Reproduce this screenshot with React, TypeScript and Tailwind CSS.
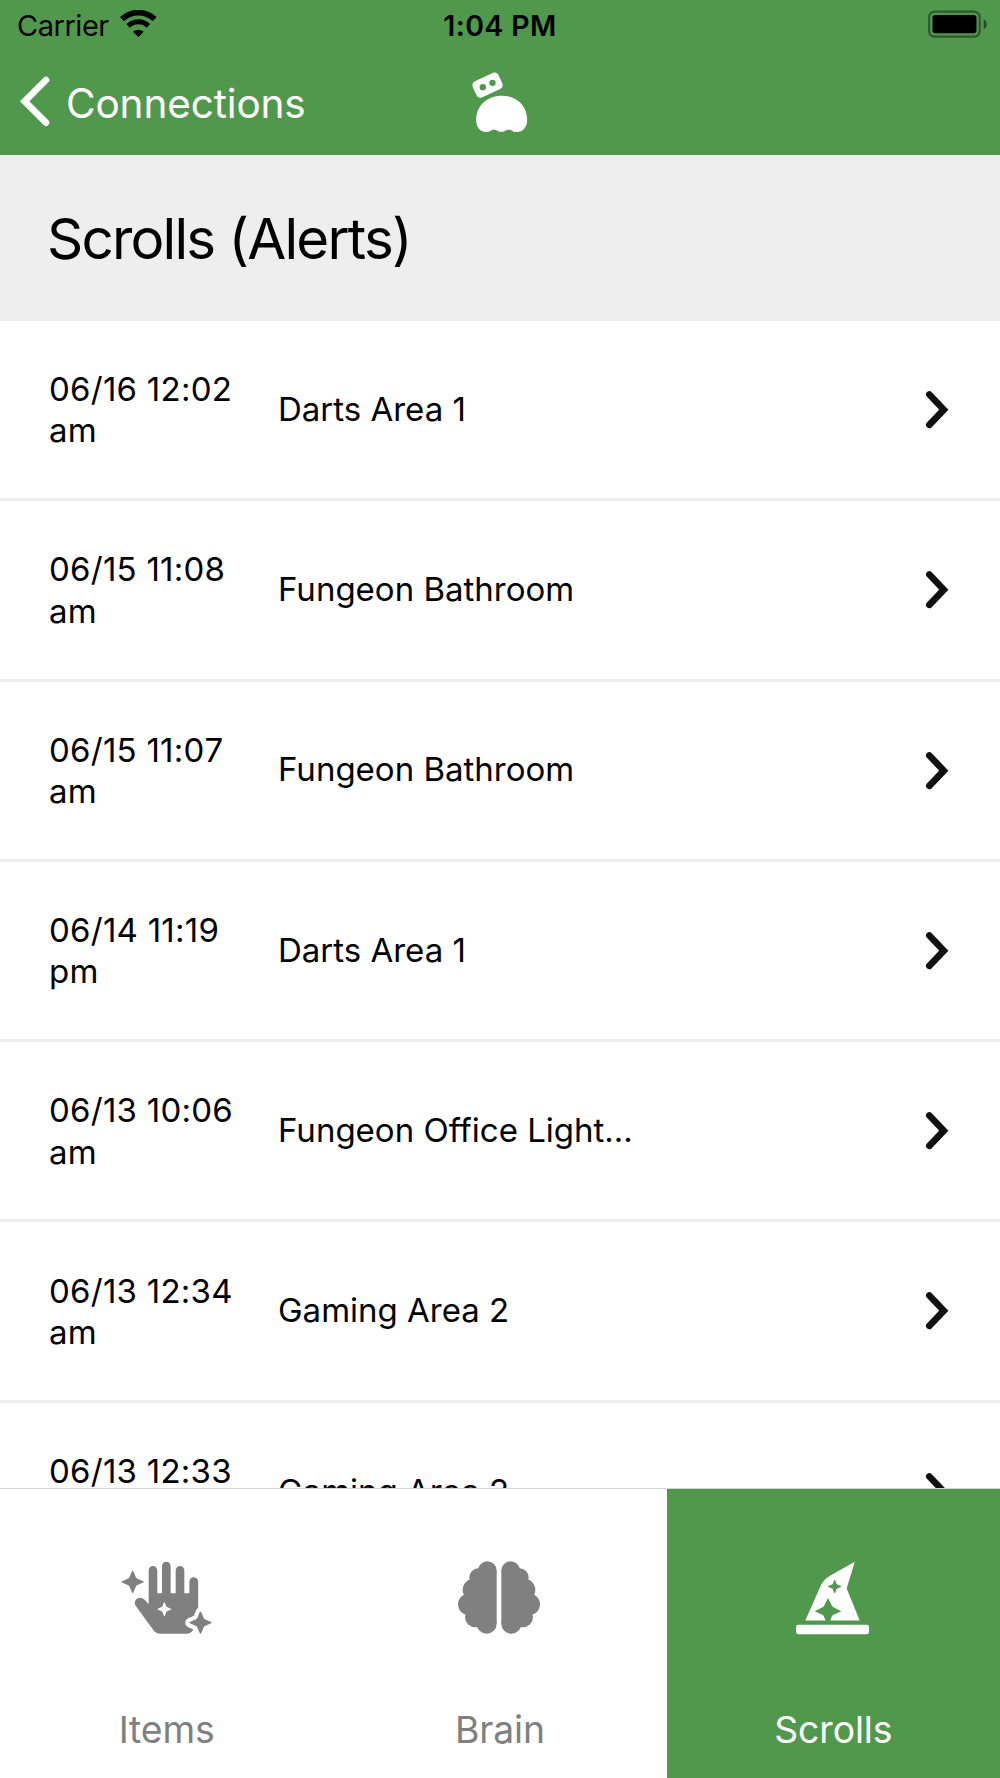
import type { ReactNode } from "react";

const SCROLLS = [
  { date: "06/16 12:02 am", name: "Darts Area 1" },
  { date: "06/15 11:08 am", name: "Fungeon Bathroom" },
  { date: "06/15 11:07 am", name: "Fungeon Bathroom" },
  { date: "06/14 11:19 pm", name: "Darts Area 1" },
  { date: "06/13 10:06 am", name: "Fungeon Office Light..." },
  { date: "06/13 12:34 am", name: "Gaming Area 2" },
  { date: "06/13 12:33 am", name: "Gaming Area 2" },
];

// Four-pointed sparkle centred on the origin, 34 units in radius.
const SPARKLE =
  "M-2 -32Q0 -35 2 -32L10 -13Q11 -11 13 -10L32 -2Q35 0 32 2L13 10Q11 11 10 13L2 32Q0 35 -2 32L-10 13Q-11 11 -13 10L-32 2Q-35 0 -32 -2L-13 -10Q-11 -11 -10 -13Z";

function WifiIcon() {
  return (
    <svg className="h-[30px] w-[37px]" viewBox="360 30 111 90" fill="none" stroke="#000">
      <path d="M366 57.3A72 72 0 0 1 464 57.3" strokeWidth="17" />
      <path d="M384.5 77.5A44.5 44.5 0 0 1 445.500 77.5" strokeWidth="15" />
      <path d="M415 111L399 95A24 24 0 0 1 431 95Z" fill="#000" stroke="none" />
    </svg>
  );
}

function BatteryIcon() {
  return (
    <svg className="h-[30px] w-[59px]" viewBox="205 30 177 90">
      <rect x="208.500" y="35" width="151.500" height="75" rx="16" fill="none" stroke="#000" strokeOpacity=".42" strokeWidth="6.500" />
      <rect x="218.500" y="45" width="132" height="54.500" rx="8" />
      <path d="M372 58Q381 62 381 73T372 88Z" fillOpacity=".5" />
    </svg>
  );
}

function BackIcon() {
  return (
    <svg className="h-[55px] w-[32px]" viewBox="57 225 96 165" fill="none" stroke="#fff" strokeWidth="20" strokeLinecap="round">
      <path d="M138 240L74 304L138 368" />
    </svg>
  );
}

function RobotLogo() {
  return (
    <svg className="h-[65px] w-[60px]" viewBox="150 210 180 195" fill="#fff">
      <rect x="160" y="228.500" width="85" height="53" rx="13" transform="rotate(-25 203 255)" />
      <circle cx="188.500" cy="261.500" r="9.500" className="fill-[#50994c]" />
      <circle cx="217.500" cy="248.500" r="9.500" className="fill-[#50994c]" />
      <path d="M168.500 360C168.500 316 202 287 245 287S321.500 316 321.500 360C321.500 382 308 396 290 396C277 396 276 389 266 389C256 389 256 395.500 244 395.500S232 389 222 389C212 389 211 396 199 396C181 396 168.500 382 168.500 360Z" />
    </svg>
  );
}

function ChevronIcon() {
  return (
    <svg className="h-[43.33px] w-[35px]" viewBox="120 84 105 130" fill="none" stroke="#111" strokeWidth="20" strokeLinecap="round">
      <path d="M148 103.500L191.500 149L148 194.500" />
    </svg>
  );
}

function HandIcon() {
  return (
    <svg className="h-[110px] w-[130px]" viewBox="5 0 390 330" fill="#808080">
      <path d="M145 170V91A12.900 12.900 0 0 1 170.800 91V160H185V78A13 13 0 0 1 211 78V160H226V91A13 13 0 0 1 252 91V160H267V125A13.200 13.200 0 0 1 293.500 125V215L277 272Q270 281 258 281H179Q168 281 161 273L107 199C99 188 106 173 119 173Q127 173 133 179L145 193Z" />
      <path d={SPARKLE} transform="translate(97 125.500)" />
      <path d={SPARKLE} transform="translate(192 207.500) scale(.62)" fill="#fff" />
      <path d={SPARKLE} transform="translate(300.500 248)" stroke="#fff" strokeWidth="25" strokeLinejoin="round" fill="#fff" />
      <path d={SPARKLE} transform="translate(300.500 248)" />
    </svg>
  );
}

function BrainHalf() {
  return (
    <>
      <circle cx="142" cy="92" r="28" />
      <circle cx="115" cy="112" r="27" />
      <circle cx="102" cy="150" r="34" />
      <circle cx="86" cy="193" r="32" />
      <circle cx="106" cy="231" r="31" />
      <circle cx="140" cy="251" r="30" />
      <rect x="105" y="92" width="65" height="159" />
    </>
  );
}

function BrainIcon() {
  return (
    <svg className="h-[110px] w-[120px]" viewBox="0 0 360 330" fill="#808080">
      <BrainHalf />
      <g transform="translate(354 0) scale(-1 1)">
        <BrainHalf />
      </g>
    </svg>
  );
}

function HatIcon() {
  return (
    <svg className="h-[110px] w-[120px]" viewBox="369 210 360 330" fill="#fff">
      <path d="M614.500 275L591 352Q590 355 591 358L629 451.500H541L546 438Q547 436 549 435L574 424L549 411Q547 410 546 408L534 384L522 408Q521 410 519 411L494 424L518 435Q520 436 521 438L527 451.500H466L512 347Q521 328 540 317Z" />
      <path d={SPARKLE} transform="translate(554 349.500) scale(.6)" className="fill-[#50994c]" />
      <rect x="438" y="464.500" width="219" height="28" rx="7" />
    </svg>
  );
}

function Tab({ label, icon, active = false }: { label: string; icon: ReactNode; active?: boolean }) {
  return (
    <button
      className={
        active
          ? "flex flex-col items-center bg-[#50994c] pt-[51px] text-white"
          : "flex flex-col items-center bg-white pt-[51px] text-[#808080]"
      }
    >
      {icon}
      <span className="mt-[55px] text-[37.3px] leading-[50px] tracking-[-0.1px]">{label}</span>
    </button>
  );
}

export default function App() {
  return (
    <div className="flex h-[1778px] w-[1000px] flex-col overflow-hidden bg-white font-['Inter',sans-serif] text-black">
      <header className="h-[155px] shrink-0 bg-[#50994c]">
        <div className="grid h-[50px] grid-cols-3 items-center">
          <div className="flex items-center gap-[11px] pl-[17px]">
            <span className="pt-[2px] text-[29px] leading-[36px] tracking-[-0.47px]">Carrier</span>
            <WifiIcon />
          </div>
          <span className="pt-[2px] text-center text-[28.5px] font-semibold leading-[36px] tracking-[0.4px]">1:04 PM</span>
          <div className="flex justify-end pr-[13px]">
            <BatteryIcon />
          </div>
        </div>
        <nav className="grid h-[105px] grid-cols-3 items-center">
          <button className="flex items-center gap-[15px] pl-[19px] text-white">
            <BackIcon />
            <span className="pt-[2px] text-[40.5px] leading-[50px] tracking-[-0.14px]">Connections</span>
          </button>
          <div className="flex justify-center">
            <RobotLogo />
          </div>
        </nav>
      </header>

      <div className="flex h-[166px] shrink-0 items-center bg-[#eeeeee] pl-[47px] pt-[2px]">
        <h1 className="text-[56.5px] leading-[70px] tracking-[-1.8px]">Scrolls (Alerts)</h1>
      </div>

      <main className="min-h-0 flex-1 overflow-hidden">
        {SCROLLS.map((s) => (
          <div key={s.date} className="flex h-[180.3px] items-center border-b-[3px] border-[#eeeeee] pr-[45px] pl-[49px]">
            <span className="mr-[39px] w-[190px] pt-[1.500px] text-[33px] leading-[41.3px] tracking-[0.25px] [font-kerning:none]">{s.date}</span>
            <span className="flex-1 text-[33px] leading-[41.5px]">{s.name}</span>
            <ChevronIcon />
          </div>
        ))}
      </main>

      <footer className="grid h-[290px] shrink-0 grid-cols-3 border-t border-[#d4d4d4]">
        <Tab label="Items" icon={<HandIcon />} />
        <Tab label="Brain" icon={<BrainIcon />} />
        <Tab label="Scrolls" icon={<HatIcon />} active />
      </footer>
    </div>
  );
}
